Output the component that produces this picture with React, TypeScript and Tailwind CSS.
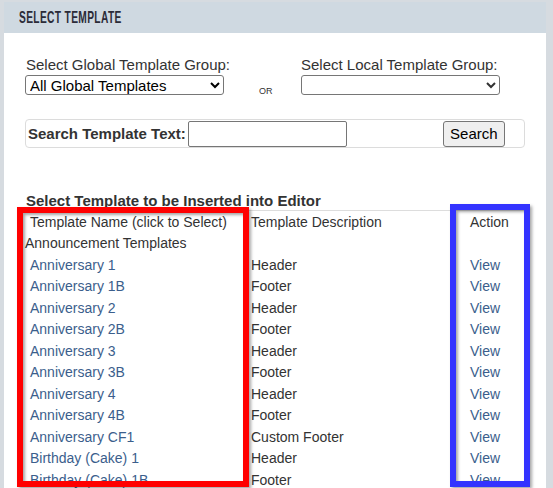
import React from "react";

const rows: [string, string][] = [
  ["Anniversary 1", "Header"],
  ["Anniversary 1B", "Footer"],
  ["Anniversary 2", "Header"],
  ["Anniversary 2B", "Footer"],
  ["Anniversary 3", "Header"],
  ["Anniversary 3B", "Footer"],
  ["Anniversary 4", "Header"],
  ["Anniversary 4B", "Footer"],
  ["Anniversary CF1", "Custom Footer"],
  ["Birthday (Cake) 1", "Header"],
  ["Birthday (Cake) 1B", "Footer"],
  ["Birthday (Cake) 2", "Header"],
];

const ff = { fontFamily: '"Liberation Sans", Arial, sans-serif' };

export default function App() {
  return (
    <div className="w-[553px] h-[488px] overflow-hidden bg-[#d6dbe0] pt-[2px] px-[4px] text-[#333] text-[14px] leading-[16px]" style={ff}>
      <div className="relative w-[542px] h-[486px] bg-white overflow-hidden">
        <div className="h-[31px] bg-[#cfd9e1] pl-[15px] flex items-center">
          <span className="inline-block origin-left scale-x-[0.6] font-bold text-[17px] text-[#2b2b38] tracking-[0.6px]">SELECT TEMPLATE</span>
        </div>
        <div className="pl-[21px] pt-[24px]">
          <div className="flex text-[15px]">
            <div className="w-[199px]">
              <div className="h-[18px] pl-[1px] whitespace-nowrap">Select Global Template Group:</div>
              <select className="w-[199px] h-[20px] border border-[#767676] rounded-[3px] text-[15px] text-black bg-white" style={ff} defaultValue="all">
                <option value="all">All Global Templates</option>
              </select>
            </div>
            <div className="w-[77px] pl-[35px] pt-[29px] text-[9px] leading-[10px]">OR</div>
            <div className="w-[199px]">
              <div className="h-[18px] whitespace-nowrap">Select Local Template Group:</div>
              <select className="w-[199px] h-[20px] border border-[#767676] rounded-[3px] text-[15px] bg-white" style={ff} defaultValue="">
                <option value=""></option>
              </select>
            </div>
          </div>
          <div className="mt-[23px] w-[500px] h-[29px] border border-[#dcdcdc] rounded-[4px] flex items-center text-[15px]">
            <span className="pl-[2px] font-bold whitespace-nowrap">Search Template Text:</span>
            <input className="ml-[2px] w-[159px] h-[26px] border border-[#767676] rounded-[2px]" />
            <button className="ml-[96px] w-[62px] h-[26px] bg-[#efefef] border border-[#767676] rounded-[3px] text-[15px] text-black" style={ff}>Search</button>
          </div>
          <div className="mt-[45px] pl-[1px] font-bold h-[16px] text-[15px] whitespace-nowrap">Select Template to be Inserted into Editor</div>
          <div className="mt-[1px] w-[505px] border-t border-[#dddddd]">
            <div className="flex h-[21.5px] items-center">
              <div className="w-[221px] pl-[5px]">Template Name (click to Select)</div>
              <div className="w-[219px] pl-[5px]">Template Description</div>
              <div className="pl-[5px]">Action</div>
            </div>
            <div className="flex h-[21.5px] items-center">
              <div>Announcement Templates</div>
            </div>
            {rows.map(([n, d]) => (
              <div key={n} className="flex h-[21.5px] items-center">
                <div className="w-[221px] pl-[5px] text-[#3b5e8c]">{n}</div>
                <div className="w-[219px] pl-[5px]">{d}</div>
                <div className="pl-[5px] text-[#3b5e8c]">View</div>
              </div>
            ))}
          </div>
        </div>
        <div className="absolute left-[13px] top-[205px] w-[232px] h-[280px] border-[6px] border-[#ff0000] shadow-[2px_2px_3px_rgba(0,0,0,0.35),inset_2px_2px_3px_rgba(0,0,0,0.35)]" />
        <div className="absolute left-[446px] top-[202px] w-[80px] h-[283px] border-[6px] border-[#3333ff] shadow-[2px_2px_3px_rgba(0,0,0,0.35),inset_2px_2px_3px_rgba(0,0,0,0.35)]" />
      </div>
    </div>
  );
}
